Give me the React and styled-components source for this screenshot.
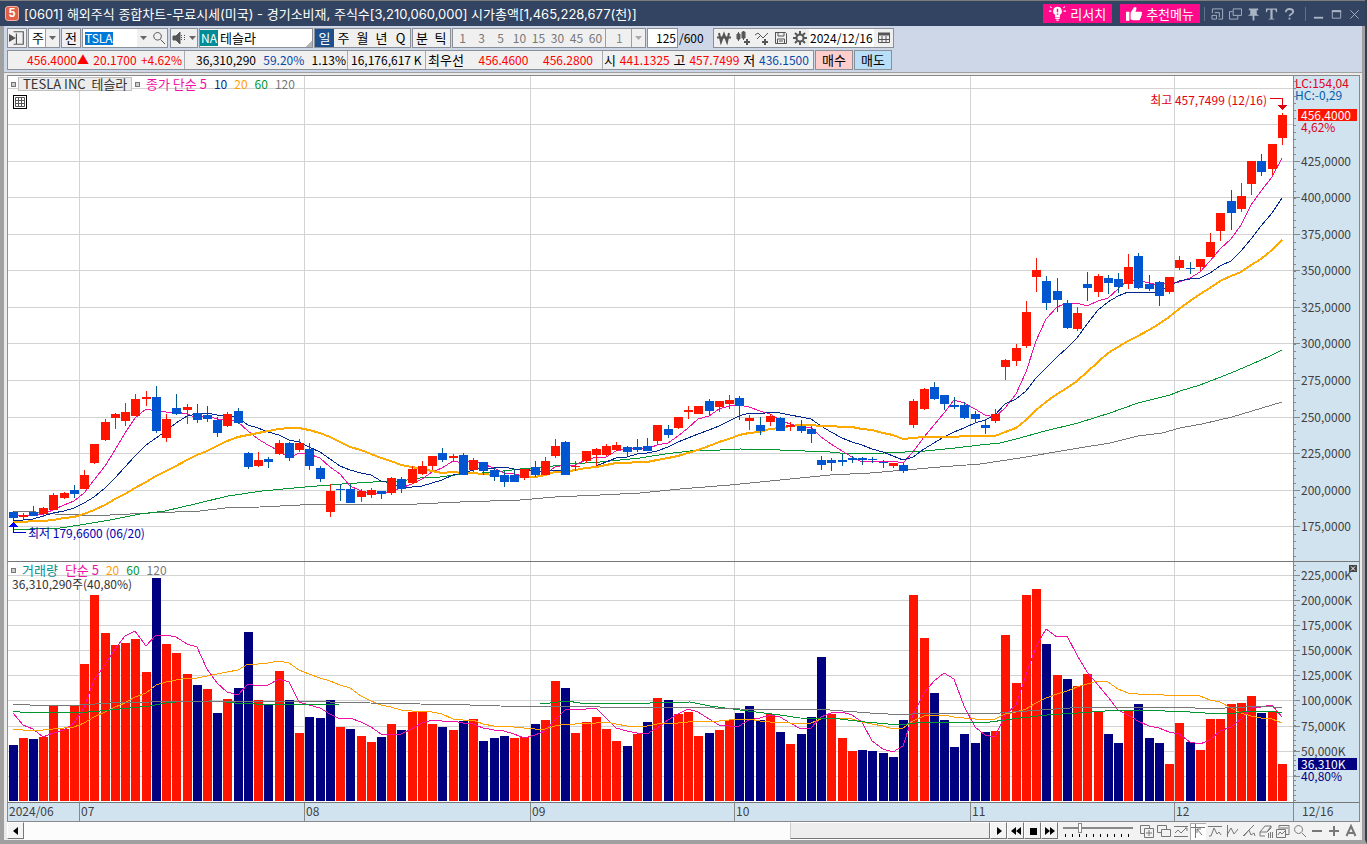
import styled, {createGlobalStyle, css} from 'styled-components';

const GlobalStyle = createGlobalStyle`
  * {
    box-sizing: border-box;
  }
  body {
    margin: 0;
    background: #a0a0a0;
    font-family: 'Noto Sans CJK KR', sans-serif;
    font-size: 13px;
    line-height: 14px;
    color: #000;
  }
  button, input, select {
    font: inherit;
    color: inherit;
    border-radius: 0;
    margin: 0;
    padding: 0;
  }
`;

const RED = '#ff1400';
const BLUE = '#0055d0';
const NAVY = '#000080';
const PINK = '#f010a8';

// [rising, high, body top, body bottom, low, volume top]
const BARS = [
  [0, 511, 512, 518, 520, 745], [1, 513, 515, 517, 519, 738],
  [0, 506, 512, 516, 516, 739], [1, 507, 508, 514, 517, 737],
  [1, 493, 495, 510, 510, 706], [1, 492, 493, 498, 499, 729],
  [0, 485, 490, 494, 498, 706], [1, 470, 475, 489, 489, 664],
  [1, 444, 444, 463, 464, 595], [1, 419, 422, 440, 441, 633],
  [1, 413, 414, 418, 429, 645], [1, 403, 412, 421, 426, 643],
  [1, 394, 399, 416, 416, 639], [1, 391, 397, 399, 406, 672],
  [0, 386, 397, 431, 433, 578], [1, 414, 419, 438, 442, 644],
  [0, 394, 408, 414, 415, 653], [1, 404, 407, 410, 424, 674],
  [0, 404, 413, 420, 423, 685], [0, 406, 415, 419, 422, 689],
  [0, 417, 420, 433, 437, 713], [1, 412, 414, 426, 427, 699],
  [0, 408, 411, 423, 424, 688], [0, 452, 453, 467, 469, 632],
  [1, 452, 460, 466, 467, 700], [0, 457, 459, 462, 468, 705],
  [1, 440, 443, 454, 455, 671], [0, 442, 443, 458, 461, 700],
  [1, 439, 443, 450, 452, 733], [0, 443, 449, 466, 470, 717],
  [0, 466, 468, 479, 482, 718], [1, 484, 491, 512, 517, 700],
  [0, 484, 489, 490, 501, 727], [0, 484, 489, 503, 503, 729],
  [1, 489, 491, 497, 502, 736], [1, 488, 490, 495, 498, 742],
  [0, 491, 491, 494, 499, 737], [1, 477, 478, 493, 495, 724],
  [0, 477, 479, 489, 493, 730], [1, 466, 469, 483, 484, 712],
  [1, 461, 466, 474, 475, 712], [1, 456, 456, 466, 470, 724],
  [0, 448, 453, 460, 462, 727], [1, 454, 456, 458, 462, 730],
  [0, 453, 455, 475, 475, 721], [1, 458, 460, 470, 472, 719],
  [0, 462, 462, 471, 475, 741], [0, 468, 470, 477, 481, 738],
  [0, 471, 475, 482, 487, 736], [0, 469, 475, 482, 482, 738],
  [1, 469, 469, 478, 480, 737], [0, 461, 467, 475, 477, 724],
  [1, 457, 461, 475, 475, 720], [1, 439, 446, 456, 458, 681],
  [0, 441, 442, 475, 475, 688], [1, 461, 466, 467, 471, 733],
  [1, 451, 451, 461, 463, 722], [1, 448, 449, 455, 466, 717],
  [1, 444, 446, 455, 456, 729], [1, 442, 445, 450, 451, 741],
  [0, 446, 447, 452, 456, 746], [0, 439, 447, 450, 452, 734],
  [0, 438, 446, 451, 451, 722], [1, 425, 425, 441, 444, 698],
  [0, 425, 429, 435, 438, 700], [1, 417, 417, 428, 429, 714],
  [1, 406, 410, 412, 419, 712], [1, 406, 406, 414, 414, 736],
  [0, 399, 401, 411, 415, 733], [1, 401, 401, 407, 412, 730],
  [1, 395, 400, 404, 409, 720], [0, 396, 398, 406, 420, 713],
  [1, 415, 418, 421, 430, 706], [0, 417, 425, 431, 435, 720],
  [1, 414, 416, 422, 426, 714], [0, 417, 418, 431, 431, 732],
  [1, 422, 425, 427, 431, 744], [0, 420, 426, 431, 433, 734],
  [0, 426, 429, 434, 443, 717], [0, 456, 460, 465, 470, 657],
  [0, 458, 460, 463, 471, 714], [0, 454, 460, 462, 466, 738],
  [0, 456, 458, 460, 463, 751], [0, 457, 458, 460, 465, 750],
  [0, 457, 459, 460, 463, 751], [0, 460, 462, 463, 468, 753],
  [1, 463, 463, 466, 468, 757], [0, 463, 465, 471, 473, 720],
  [1, 399, 401, 425, 428, 595], [1, 388, 389, 409, 410, 638],
  [0, 382, 387, 399, 400, 693], [0, 395, 395, 404, 410, 720],
  [0, 397, 405, 407, 409, 747], [0, 402, 405, 418, 419, 734],
  [0, 411, 414, 419, 423, 743], [0, 419, 425, 428, 434, 732],
  [1, 409, 414, 421, 423, 731], [1, 359, 360, 367, 380, 635],
  [1, 344, 348, 361, 366, 683], [1, 301, 312, 346, 348, 595],
  [1, 258, 270, 277, 292, 589], [0, 276, 281, 303, 310, 644],
  [0, 278, 291, 300, 312, 675], [0, 300, 303, 328, 329, 679],
  [1, 307, 313, 329, 331, 686], [0, 272, 284, 288, 301, 674],
  [1, 274, 276, 292, 297, 712], [0, 275, 278, 283, 294, 734],
  [0, 273, 279, 287, 293, 743], [1, 254, 267, 284, 289, 711],
  [0, 253, 256, 288, 289, 704], [0, 275, 284, 289, 291, 738],
  [0, 281, 282, 296, 306, 743], [1, 277, 277, 292, 294, 764],
  [1, 256, 260, 268, 270, 723], [0, 262, 268, 269, 274, 742],
  [1, 259, 259, 267, 271, 750], [1, 233, 242, 257, 257, 719],
  [1, 213, 213, 231, 241, 719], [0, 190, 201, 213, 230, 704],
  [1, 183, 196, 209, 212, 703], [1, 161, 161, 184, 195, 696],
  [0, 154, 161, 172, 176, 713], [1, 144, 144, 169, 175, 711],
  [1, 113, 115, 138, 145, 764],
];

const VOLUME_DOWN = new Set([
  0, 2, 14, 18, 20, 22, 23, 25, 27, 29, 30, 31, 33, 36, 38, 42, 44, 46, 47, 48,
  51, 54, 60, 62, 64, 68, 71, 72, 73, 75, 77, 78, 79, 83, 84, 85, 86, 87, 90,
  91, 92, 93, 94, 95, 101, 103, 107, 108, 110, 111, 112, 115, 122,
]);

const left = i => Math.floor(9 + i * 10.236);
const closes = BARS.map(([up, , top, bottom]) => (up ? top : bottom));
const volumes = BARS.map(bar => bar[5]);

// `lead` holds the averages of the days before a full window is available
const average = (values, n, lead) =>
  values
    .map((_, i) => {
      const sum = values.slice(Math.max(0, i - n + 1), i + 1);
      const y = i < lead.length ? lead[i] : sum.reduce((a, b) => a + b) / n;
      return `${left(i) + 4},${Math.round(y)}`;
    })
    .join(' ');

const PRICE_5 = average(closes, 5, [515, 515, 515, 514]);
const PRICE_10 = average(closes, 10, [
  520, 520, 519, 516, 513, 511, 508, 503, 497,
]);
const PRICE_20 = average(closes, 20, [
  522, 522, 521, 521, 520, 518, 517, 514, 510, 505, 499, 494, 488, 482, 476,
  471, 466, 460, 455,
]);
const PRICE_60 =
  '13,529 30,529 60,528 80,525 110,520 140,514 165,511 195,504 228,496 262,491 305,487 330,485 342,484 373,482 400,481 420,478 440,477 455,475 495,472 520,469 545,467 570,464 600,462 640,458 665,454 690,451 720,450 740,449 780,450 830,452 850,454 885,453 925,451 955,448 980,445 1000,443 1016,439 1045,431 1078,423 1110,413 1138,403 1170,395 1180,391 1200,385 1231,373 1252,364 1270,356 1282,350';
const PRICE_120 =
  '13,511 27,511 55,514 80,515 110,515 150,513 200,511 225,508 260,507 300,505 330,504 417,504 460,502 520,500 555,497 600,495 640,493 680,489 730,485 780,480 830,475 870,473 905,470 940,467 980,464 1020,458 1073,449 1110,443 1138,436 1162,433 1180,428 1202,424 1232,417 1262,408 1282,402';
const VOLUME_5 = average(volumes, 5, [713, 725, 729, 737]);
const VOLUME_20 = average(volumes, 20, [
  729, 730, 730, 730, 729, 728, 727, 723, 717, 712, 707, 703, 697, 693, 685,
  682, 680, 678, 678,
]);
const VOLUME_60 =
  '13,711 20,712 55,712 75,713 100,711 120,709 150,706 165,703 185,701 215,701 235,703 250,703 260,705 340,704 540,704 550,703 567,701 580,703 650,703 690,702 710,706 740,710 780,715 800,718 840,719 865,722 900,725 915,723 940,722 990,722 1020,718 1047,715 1078,713 1105,711 1140,710 1165,711 1190,712 1205,713 1235,713 1250,711 1270,711 1282,713';
const VOLUME_120 =
  '13,704 30,705 80,705 110,703 150,702 210,701 330,702 370,703 420,704 470,705 500,706 600,707 690,707 740,709 830,710 870,713 905,715 920,713 1000,713 1040,710 1085,707 1170,707 1195,708 1225,708 1265,706 1282,708';

const PRICE_GRID = [88, 124, 161, 197, 234, 270, 307, 343, 380, 417, 453, 490, 526];
const VOLUME_GRID = [575, 600, 625, 650, 675, 700, 726, 751, 776];
const MONTHS = [
  ['2024/06', 71], ['07', 225], ['08', 226], ['09', 204], ['10', 236],
  ['11', 204], ['12', 119],
];
const MONTH_LINES = [79, 304, 530, 734, 970, 1174];

const Window = styled.div`
  display: flex;
  flex-direction: column;
  min-height: 100vh;
  border-bottom: 4px solid #a0a0a0;
  border-right: 2px solid #36404c;
`;

const TitleBar = styled.header`
  display: flex;
  align-items: center;
  height: 26px;
  padding: 0 4px 0 5px;
  border-top: 1px solid #7d7d7d;
  background: #324461;
  color: #fff;
`;

const Title = styled.h1`
  flex: 1;
  margin: 0 0 0 5px;
  font-family: Inter, 'Noto Sans CJK KR', sans-serif;
  font-size: 13px;
  font-weight: normal;
  white-space: pre;
`;

const AppBadge = styled.span`
  width: 14px;
  height: 15px;
  border: 1px solid #f3b3a0;
  border-radius: 3px;
  background: #e2604a;
  font: bold 12px/13px 'Liberation Sans', sans-serif;
  text-align: center;
`;

const PinkButton = styled.button`
  display: flex;
  align-items: center;
  gap: 4px;
  height: 19px;
  margin-right: ${({$gap}) => $gap}px;
  padding: 0 6px;
  border: 0;
  background: #ff0a8a;
  color: #fff;
`;

const TitleIcons = styled.div`
  display: flex;
  align-items: center;
  gap: 5px;
  padding-left: 6px;
  margin-right: ${({$gap = 0}) => $gap}px;
  border-left: 1px solid #62718a;
`;

const GlyphButton = styled.button`
  display: flex;
  align-items: center;
  justify-content: center;
  width: 13px;
  height: 14px;
  border: 0;
  background: none;
  color: #aab4c4;
`;

const Body = styled.div`
  display: flex;
  flex: 1;
  flex-direction: column;
  border: solid #a0a0a0;
  border-width: 0 3px 0 4px;
`;

const Toolbars = styled.div`
  height: 47px;
  padding: 2px 0 0 3px;
  border-bottom: 1px solid #a0a0a0;
  background: #cdd7e7;
`;

const Toolbar = styled.div`
  display: flex;
  height: 20px;
  margin-bottom: 2px;
`;

const Group = styled.div`
  display: flex;
  margin-right: ${({$gap = 1}) => $gap}px;
  border: 1px solid #8a8f98;
  background: #f0f0f0;
  > * + * {
    border-left: 1px solid #9a9fa8;
  }
`;

const ToolButton = styled.button`
  display: flex;
  align-items: center;
  justify-content: center;
  width: ${({$width = 19}) => $width}px;
  border: 0;
  background: #f0f0f0;
  svg {
    color: #555;
  }
  ${({$active}) =>
    $active &&
    css`
      background: #1c4f8c;
      color: #fff;
    `}
`;

const MinuteButton = styled(ToolButton)`
  font-size: 12px;
  color: #777;
`;

const Select = styled.select`
  appearance: none;
  width: ${({$width}) => $width}px;
  padding: 0 0 0 ${({$muted}) => ($muted ? 10 : 3)}px;
  border: 0;
  outline: 0;
  font-size: ${({$muted}) => ($muted ? 12 : 13)}px;
  color: ${({$muted}) => ($muted ? '#888' : '#000')};
  background: linear-gradient(#9a9fa8, #9a9fa8) no-repeat right 13px top / 1px 100%,
    linear-gradient(#f0f0f0, #f0f0f0) no-repeat right / 13px 100%,
    ${({$muted}) => ($muted ? '#f0f0f0' : '#fff')};
`;

const SelectBox = styled.label`
  display: grid;
  align-items: center;
  > * {
    grid-area: 1 / 1;
    height: 100%;
  }
  > svg {
    justify-self: end;
    width: 7px;
    height: 4px;
    margin-right: 3px;
    pointer-events: none;
  }
`;

const TextInput = styled.input`
  width: ${({$width}) => $width}px;
  padding: 0 1px;
  border: 0;
  outline: 0;
  background: #fff;
  font-size: 12px;
  text-align: ${({$align = 'left'}) => $align};
`;

const SymbolInput = styled(TextInput)`
  padding: 0 2px;
  color: #fff;
  background: linear-gradient(#0078d7, #0078d7) no-repeat 2px 3px / 28px 13px, #fff;
`;

const StockName = styled.div`
  display: flex;
  align-items: center;
  gap: 2px;
  width: 112px;
  background: linear-gradient(135deg, #fff 95%, #b4b4b4 95%);
`;

const Market = styled.span`
  padding: 1px;
  background: #008c96;
  color: #fff;
  font-size: 12px;
`;

const Total = styled.span`
  width: 34px;
  font-size: 12px;
  line-height: 20px;
`;

const Quote = styled.div`
  display: flex;
  width: 807px;
  margin-right: 1px;
  border: 1px solid #8a8f98;
  background: #f0f0f0;
  font-size: 12px;
  line-height: 18px;
`;

const QuoteCell = styled.div`
  display: flex;
  justify-content: space-between;
  width: ${({$width}) => $width}px;
  padding: 0 ${({$right = 2}) => $right}px 0 ${({$left = 4}) => $left}px;
  border-right: 1px solid #a8adb4;
  white-space: nowrap;
  &:last-child {
    border-right: 0;
  }
`;

const QuoteLabel = styled.span`
  font-size: 13px;
`;

const Tone = styled.span`
  color: ${({$color}) => $color};
`;

const Period = styled(Tone)`
  font-size: 12px;
`;

const TradeButton = styled.button`
  width: 38px;
  margin-right: 1px;
  border: 1px solid #8a8f98;
  background: ${({$fill}) => $fill};
`;

const ChartFrame = styled.main`
  display: flex;
  flex: 1;
  flex-direction: column;
  padding: 2px 2px 0 3px;
  background: #ebebeb;
`;

const Chart = styled.div`
  display: grid;
  flex: 1;
  grid-template: 486fr 241fr 19px / minmax(0, 1fr) 66px;
  border: 1px solid #888;
  border-width: 1px 1px 0 0;
  background: #fff;
`;

const Panel = styled.section`
  position: relative;
  border-left: 1px solid #909090;
  border-bottom: 1px solid #777;
`;

const Plot = styled.svg`
  position: absolute;
  width: 100%;
  height: 100%;
  shape-rendering: crispEdges;
  fill: none;
`;

const Axis = styled(Panel)`
  border-left: 0;
  background: #d2e3f0;
`;

const AxisLabel = styled.span`
  position: absolute;
  left: ${({$left = 8}) => $left}px;
  right: 2px;
  margin-top: -6px;
  padding-left: ${({$fill}) => ($fill ? 3 : 0)}px;
  font-size: 12px;
  line-height: 12px;
  background: ${({$fill = 'none'}) => $fill};
  color: ${({$color = '#404040'}) => $color};
`;

const Legend = styled.div`
  position: absolute;
  top: 1px;
  left: 3px;
  display: flex;
  align-items: center;
  white-space: pre;
`;

const Marker = styled.i`
  width: 5px;
  height: 5px;
  margin-right: ${({$gap = 2}) => $gap}px;
  border: 1px solid #777;
  background: #ccc;
`;

const Name = styled.span`
  width: 114px;
  height: 14px;
  margin-right: 3px;
  padding: 0 2px 0 4px;
  border: 1px solid #c0c0c0;
  background: #ececec;
  color: #333;
  line-height: 12px;
`;

const Averages = styled.span`
  display: flex;
  gap: 7px;
`;

const TableButton = styled.button`
  position: absolute;
  top: 19px;
  left: 5px;
  width: 14px;
  height: 14px;
  border: 1px solid #000;
  background: #fff;
  svg {
    display: block;
  }
`;

const Note = styled.span`
  position: absolute;
  top: ${({$top}) => $top};
  left: ${({$left = 'auto'}) => $left};
  right: ${({$right = 'auto'}) => $right};
  color: ${({$color}) => $color};
  font-size: 12px;
  line-height: 12px;
  white-space: nowrap;
`;

const CloseButton = styled.button`
  position: absolute;
  top: 3px;
  right: 2px;
  width: 8px;
  height: 7px;
  border: 0;
  background: #444;
  svg {
    display: block;
  }
`;

const MonthRow = styled.div`
  display: grid;
  grid-template-columns: ${MONTHS.map(([, width]) => `${width}fr`).join(' ')};
  border: solid #888;
  border-width: 0 0 1px 1px;
  background: #d2e3f0;
`;

const Month = styled.span`
  padding: 1px 0 0 1px;
  border-left: ${({$first}) => ($first ? 0 : 1)}px solid #888;
  color: #404040;
  font-size: 12px;
`;

const LastDay = styled(Month)`
  padding-left: 8px;
  border-bottom: 1px solid #888;
  background: #d2e3f0;
`;

const Footer = styled.footer`
  display: flex;
  height: 18px;
  background: #f2f2f2;
`;

const FooterButton = styled.button`
  display: flex;
  align-items: center;
  justify-content: center;
  width: 17px;
  height: 17px;
  border: 1px solid;
  border-color: #fff #777 #777 #fff;
  background: #f4f4f4;
`;

const Track = styled.div`
  display: grid;
  flex: 1;
  grid-template-columns: 765fr 200fr;
  background: #fcfcfc;
`;

const Thumb = styled.div`
  grid-column: 2;
  height: 17px;
  border: 1px solid;
  border-color: #fff #777 #777 #ccc;
  background: #eee;
`;

const Zoom = styled.label`
  display: flex;
  width: 70px;
  margin: 0 6px 0 5px;
  flex-direction: column;
`;

const Range = styled.input`
  appearance: none;
  width: 70px;
  height: 12px;
  background: linear-gradient(#888, #888) no-repeat center / 100% 2px;
  &::-webkit-slider-thumb {
    appearance: none;
    width: 4px;
    height: 10px;
    border: 1px solid #888;
    background: #fff;
  }
`;

const DrawTools = styled.div`
  display: flex;
  align-items: center;
  gap: 1px;
  padding-right: 1px;
`;

const DrawButton = styled.button`
  display: flex;
  align-items: center;
  justify-content: center;
  width: 16px;
  height: 17px;
  border: 0;
  background: ${({$on}) => ($on ? '#fff' : 'none')};
  box-shadow: ${({$on}) => ($on ? 'inset 1px 1px #aaa' : 'none')};
  color: #777;
`;

const Icon = ({d, size = 14, fill = 'none', width = 1, children}) => (
  <svg
    width={size}
    height={size}
    viewBox="0 0 14 14"
    fill={fill}
    stroke={fill === 'none' ? 'currentColor' : 'none'}
    strokeWidth={width}
    aria-hidden="true"
  >
    {d && <path d={d} />}
    {children}
  </svg>
);

const Caret = ({color = '#666'}) => (
  <svg viewBox="0 0 7 4" width="7" height="4" fill={color} aria-hidden="true">
    <path d="M0 0h7L3.5 4z" />
  </svg>
);

const Dropdown = ({label, value, width, muted}) => (
  <SelectBox>
    <Select aria-label={label} $width={width} $muted={muted} defaultValue={value}>
      <option>{value}</option>
    </Select>
    <Caret color={muted ? '#aaa' : '#666'} />
  </SelectBox>
);

const Header = () => (
  <TitleBar>
    <AppBadge>5</AppBadge>
    <Title>
      [0601] 해외주식 종합차트-무료시세(미국) - 경기소비재, 주식수[3,210,060,000]
      {' 시가총액[1,465,228,677(천)]'}
    </Title>
    <PinkButton $gap={8}>
      <Icon size={17} fill="#fff">
        <path d="M7 1.5a3.6 3.6 0 0 1 2 6.6V10H5V8.1a3.6 3.6 0 0 1 2-6.6zM5.2 10.6h3.6v1H5.2zM6 12h2v1H6zM0 4.5h2v1H0zM12 4.5h2v1h-2zM1 1l1.5 1-.6.6L.6 1.6zM13 1l-1.5 1 .6.6 1.3-1z" />
        <path d="M6.4 3h1.2v3H6.4zM6.4 7h1.2v1H6.4z" fill="#ff0a8a" />
      </Icon>
      리서치
    </PinkButton>
    <PinkButton $gap={4}>
      <Icon
        size={16}
        fill="#fff"
        d="M0 5h3v8H0zM4 6l3-5h1.5c1 0 .8 2-.2 4H13c1.3 0 1.3 1.6.4 2 .8.6.5 1.7-.4 2 .5.8 0 1.6-.8 1.8.3 1-.2 1.7-1.2 1.7H6l-2-1z"
      />
      추천메뉴
    </PinkButton>
    <TitleIcons $gap={9}>
      <GlyphButton aria-label="화면 크기">
        <Icon d="M1.5 6V1.5h11v11H8M4 5.5h5v5M1 8.5h5v4H1z" />
      </GlyphButton>
      <GlyphButton aria-label="화면 복사">
        <Icon d="M4.5 1.5h9v7h-9zM4 4.5H.5v8h9V9" />
      </GlyphButton>
      <GlyphButton aria-label="고정">
        <Icon fill="currentColor" d="M2 1h10v2h-1.5v4L13 9H8v5H6V9H1l2.5-2V3H2z" />
      </GlyphButton>
      <GlyphButton aria-label="글꼴">
        <Icon fill="currentColor" d="M1 1h12v4h-1L11 2.5H8.2V12H10v1H4v-1h1.8V2.5H3L2 5H1z" />
      </GlyphButton>
      <GlyphButton aria-label="도움말">
        <Icon width={2} d="M3 5C3 0 11 1 11 4.5 11 7 7 7 7 9.5M7 11v2" />
      </GlyphButton>
    </TitleIcons>
    <TitleIcons>
      <GlyphButton aria-label="최소화">
        <Icon width={2} d="M2 11h10" />
      </GlyphButton>
      <GlyphButton aria-label="최대화">
        <Icon>
          <path d="M2.5 3.5h9v8h-9z" />
          <path d="M2 4h10" strokeWidth="2" />
        </Icon>
      </GlyphButton>
      <GlyphButton aria-label="닫기">
        <Icon d="M2.5 3l9 9M11.5 3l-9 9" />
      </GlyphButton>
    </TitleIcons>
  </TitleBar>
);

const Controls = () => (
  <Toolbar>
    <Group>
      <ToolButton aria-label="화면 연결" $width={18}>
        <Icon size={16}>
          <path d="M4 1.5h8.5v11H4M6.5 3v9" />
          <path d="M0 4v6l5-3z" fill="currentColor" />
        </Icon>
      </ToolButton>
    </Group>
    <Group>
      <Dropdown label="구분" value="주" width={30} />
    </Group>
    <Group>
      <ToolButton $width={18}>전</ToolButton>
    </Group>
    <Group $gap={2}>
      <SymbolInput aria-label="종목 코드" defaultValue="TSLA" $width={54} />
      <ToolButton aria-label="종목 목록" $width={13}>
        <Caret />
      </ToolButton>
      <ToolButton aria-label="검색" $width={17}>
        <Icon d="M5.5 1.5a3.8 3.8 0 1 0 .1 0zM8.5 8.5l4.5 4.5" />
      </ToolButton>
    </Group>
    <Group>
      <ToolButton aria-label="소리" $width={16}>
        <Icon>
          <path d="M1 5h3l4-4v12L4 9H1z" fill="#555" />
          <path d="M9.5 4v6M12.5 4v6" strokeDasharray="1 1" />
        </Icon>
      </ToolButton>
      <ToolButton aria-label="소리 설정" $width={10}>
        <Caret />
      </ToolButton>
    </Group>
    <Group>
      <StockName>
        <Market>NA</Market>테슬라
      </StockName>
    </Group>
    <Group>
      {['일', '주', '월', '년', 'Q'].map((period, i) => (
        <ToolButton key={period} $active={i === 0}>
          {period}
        </ToolButton>
      ))}
    </Group>
    <Group>
      <ToolButton $width={18}>분</ToolButton>
      <ToolButton>틱</ToolButton>
    </Group>
    <Group>
      {[1, 3, 5, 10, 15, 30, 45, 60].map(minutes => (
        <MinuteButton key={minutes}>{minutes}</MinuteButton>
      ))}
      <Dropdown label="분 간격" value="1" width={39} muted />
    </Group>
    <Group>
      <TextInput aria-label="표시 개수" defaultValue="125" $width={29} $align="right" />
    </Group>
    <Total>/600</Total>
    <Group>
      <ToolButton aria-label="원화">
        <Icon width={2} d="M2 2l2 9 3-8 3 8 2-9M0 6.5h14" />
      </ToolButton>
      <ToolButton aria-label="봉 추가">
        <Icon>
          <path d="M1 3h3v5H1zM6 1h3v6H6z" fill="#666" />
          <path d="M2.5 1v9M7.5 0v9" />
          <path d="M11 8v6M8 11h6" strokeWidth="2" />
        </Icon>
      </ToolButton>
      <ToolButton aria-label="지표 추가">
        <Icon>
          <path d="M0 4l3-2 5 5 5-5M2 8l3-3" />
          <path d="M10 8v6M7 11h6" strokeWidth="2" />
        </Icon>
      </ToolButton>
      <ToolButton aria-label="저장">
        <Icon d="M1 1.5h10.5l1 1v10H1.5v-11M4 1v4h6V1M3.5 13V8h7v5M5 10h4" />
      </ToolButton>
      <ToolButton aria-label="설정">
        <Icon>
          <circle cx="7" cy="7" r="3.5" strokeWidth="2" />
          <path
            d="M7 0v3M7 11v3M0 7h3M11 7h3M2 2l2 2M10 10l2 2M12 2l-2 2M4 10l-2 2"
            strokeWidth="2"
          />
        </Icon>
      </ToolButton>
      <TextInput aria-label="날짜" defaultValue="2024/12/16" $width={65} />
      <ToolButton aria-label="달력">
        <Icon>
          <path d="M1.5 2.5h11v9h-11zM5 5v7M9 5v7M2 8.5h11" />
          <path d="M1 3h12" strokeWidth="3" />
        </Icon>
      </ToolButton>
    </Group>
  </Toolbar>
);

const Quotes = () => (
  <Toolbar>
    <Quote>
      <QuoteCell $width={177} $left={19}>
        <Tone $color="red">456.4000▲</Tone>
        <Tone $color="red">20.1700</Tone>
        <Tone $color="red">+4.62%</Tone>
      </QuoteCell>
      <QuoteCell $width={163} $left={11} $right={1}>
        <span>36,310,290</span>
        <Tone $color="#0a4aa8">59.20%</Tone>
        <span>1.13%</span>
      </QuoteCell>
      <QuoteCell $width={78} $left={3}>
        16,176,617 K
      </QuoteCell>
      <QuoteCell $width={177} $left={2} $right={9}>
        <QuoteLabel>최우선</QuoteLabel>
        <Tone $color="red">456.4600</Tone>
        <Tone $color="red">456.2800</Tone>
      </QuoteCell>
      <QuoteCell $width={210} $left={1} $right={4}>
        <QuoteLabel>시</QuoteLabel>
        <Tone $color="red">441.1325</Tone>
        <QuoteLabel>고</QuoteLabel>
        <Tone $color="red">457.7499</Tone>
        <QuoteLabel>저</QuoteLabel>
        <Tone $color="#0a4aa8">436.1500</Tone>
      </QuoteCell>
    </Quote>
    <TradeButton $fill="#ffcdcb">매수</TradeButton>
    <TradeButton $fill="#b9def7">매도</TradeButton>
  </Toolbar>
);

const Grid = ({rows, top, bottom}) => (
  <g stroke="#d3d3d3">
    {rows.map(y => (
      <path key={y} d={`M8 ${y + 0.5}H1293`} />
    ))}
    {MONTH_LINES.map(x => (
      <path key={x} d={`M${x + 0.5} ${top}V${bottom}`} />
    ))}
  </g>
);

const PricePanel = () => (
  <Panel>
    <Plot viewBox="8 76 1285 485" preserveAspectRatio="none">
      <Grid rows={PRICE_GRID} top={76} bottom={561} />
      <polyline points={PRICE_120} stroke="#777" />
      <polyline points={PRICE_60} stroke="#009632" />
      <polyline points={PRICE_5} stroke={PINK} />
      <polyline points={PRICE_10} stroke="#002890" />
      <polyline points={PRICE_20} stroke="#ffaa00" strokeWidth="2" />
      {BARS.map(([up, high, top, bottom, low], i) => (
        <g key={i} fill={up ? RED : BLUE}>
          <rect
            x={left(i) + 4}
            y={high}
            width="1"
            height={low - high}
            fill={up ? RED : '#005a8c'}
          />
          <rect x={left(i)} y={top} width="9" height={bottom - top} />
        </g>
      ))}
      <path d="M13.5 526V532.5H26" stroke="#0000c0" />
      <path d="M9 527h9l-4.5-5z" fill="#0000ff" />
      <path d="M1270 98.5H1282.5V105" stroke="#e00010" />
      <path d="M1278 105h9l-4.5 5z" fill="#e00010" />
    </Plot>
    <Legend>
      <Marker />
      <Name>TESLA INC  테슬라</Name>
      <Marker $gap={6} />
      <Averages>
        <Tone $color={PINK}>종가 단순 5</Tone>
        <Period $color="#002890">10</Period>
        <Period $color="#ffa000">20</Period>
        <Period $color="#009632">60</Period>
        <Period $color="#777">120</Period>
      </Averages>
    </Legend>
    <TableButton aria-label="데이터 표">
      <svg width="12" height="12" stroke="#555" fill="none">
        <path d="M1.5 1.5h9v9h-9zM4.5 2v9M7.5 2v9M2 4.5h9M2 7.5h9" />
      </svg>
    </TableButton>
    <Note $top="93%" $left="20px" $color="#0000b0">
      최저 179,6600 (06/20)
    </Note>
    <Note $top="18px" $right="26px" $color="#e00010">
      최고 457,7499 (12/16)
    </Note>
  </Panel>
);

const VolumePanel = () => (
  <Panel>
    <Plot viewBox="8 562 1285 240" preserveAspectRatio="none">
      <Grid rows={VOLUME_GRID} top={562} bottom={803} />
      {volumes.map((y, i) => (
        <rect
          key={i}
          x={left(i)}
          y={y}
          width="9"
          height={801 - y}
          fill={VOLUME_DOWN.has(i) ? NAVY : RED}
        />
      ))}
      <polyline points={VOLUME_5} stroke={PINK} />
      <polyline points={VOLUME_20} stroke="#ffa000" />
      <polyline points={VOLUME_60} stroke="#009632" />
      <polyline points={VOLUME_120} stroke="#777" />
    </Plot>
    <Legend>
      <Marker $gap={6} />
      <Averages>
        <Tone $color="#009090">거래량</Tone>
        <Tone $color={PINK}>단순 5</Tone>
        <Period $color="#ffa000">20</Period>
        <Period $color="#009632">60</Period>
        <Period $color="#777">120</Period>
      </Averages>
    </Legend>
    <Note $top="16px" $left="4px" $color="#333">
      36,310,290주(40,80%)
    </Note>
  </Panel>
);

const Ticks = ({rows, top, height, start, step}) => (
  <Plot viewBox={`0 ${top} 66 ${height}`} preserveAspectRatio="none">
    <g stroke="#888">
      <path d={`M.5 ${top}v${height}`} />
      {Array.from({length: Math.floor((top + height - start) / step) + 1}, (_, i) => (
        <path key={i} d={`M0 ${Math.round(start + i * step) + 0.5}h3`} />
      ))}
      {rows.map(y => (
        <path key={y} d={`M0 ${y + 0.5}h7`} />
      ))}
    </g>
  </Plot>
);

const PriceAxis = () => {
  const place = y => ({top: `${((y - 76) / 485) * 100}%`});
  return (
    <Axis>
      <Ticks rows={PRICE_GRID.slice(2)} top={76} height={485} start={81} step={7.3} />
      <AxisLabel $left={2} $color="#e00020" style={place(83)}>LC:154,04</AxisLabel>
      <AxisLabel $left={2} $color="#0060a8" style={place(95)}>HC:-0,29</AxisLabel>
      <AxisLabel $left={5} $color="#fff" $fill={RED} style={place(115)}>
        456,4000
      </AxisLabel>
      <AxisLabel $color="#e00020" style={place(127)}>4,62%</AxisLabel>
      {PRICE_GRID.slice(2).map((y, i) => (
        <AxisLabel key={y} style={place(y)}>
          {425 - i * 25},0000
        </AxisLabel>
      ))}
    </Axis>
  );
};

const VolumeAxis = () => {
  const place = y => ({top: `${((y - 562) / 240) * 100}%`});
  return (
    <Axis>
      <Ticks rows={VOLUME_GRID} top={562} height={240} start={565} step={5} />
      {VOLUME_GRID.slice(0, 8).map((y, i) => (
        <AxisLabel key={y} style={place(y)}>
          {225 - i * 25},000K
        </AxisLabel>
      ))}
      <AxisLabel $left={5} $color="#fff" $fill={NAVY} style={place(764)}>
        36,310K
      </AxisLabel>
      <AxisLabel $color={NAVY} style={place(776)}>40,80%</AxisLabel>
      <CloseButton aria-label="거래량 닫기">
        <svg width="8" height="7" stroke="#fff">
          <path d="M2 1.5l4 4M6 1.5l-4 4" />
        </svg>
      </CloseButton>
    </Axis>
  );
};

const DRAW_TOOLS = [
  ['차트 추가', 'M4 9.5H.5v-8h9V4M4.5 4.5h9v9h-9zM9 6v6M6 9h6'],
  ['차트 겹치기', 'M4 8.5H.5v-7h9V5M4.5 5.5h9v7h-9z'],
  ['구간', 'M0 2.5h14M0 12.5h14M1 9l3-3 3 3 5-5M11 4h2v3'],
  ['십자선', 'M0 3.5h14M4.5 0v14M6 5l5 6M6 9V5h4'],
  ['추세선', 'M0 2.5h14M1 12h2l3-8 3 6 2-2 2 3'],
  ['수직선', 'M2.5 1v12M2 11l4-7 3 6 4-5'],
  ['각도선', 'M1 12L12 1M2 12l5-6 2 5 3-2 1 3'],
  ['지우개', 'M1 8l5-6h6L8 8zM1 8v4h5M8 8l4-4V2M9.5 9v5M11.5 8v6M13.5 8v6'],
  ['복사', 'M.5 5.5h9v8h-9zM3 5V1.5h10v9h-3M2 11l2-3 2 2 3-3M4 4h8'],
  ['확대경', 'M5.5 1.5a4 4 0 1 0 .1 0zM9 9l4 4'],
  ['축소', 'M2 7h10', 2],
  ['확대', 'M2 7h10M7 2v10', 2],
  ['글자', 'M2.5 12L7 2l4.5 10M4 9h6', 2],
];

const BottomBar = () => (
  <Footer>
    <FooterButton aria-label="왼쪽으로">
      <Icon fill="#000" d="M9 3v8L4 7z" />
    </FooterButton>
    <Track>
      <Thumb />
    </Track>
    <FooterButton aria-label="오른쪽으로">
      <Icon fill="#000" d="M5 3v8l5-4z" />
    </FooterButton>
    <FooterButton aria-label="뒤로">
      <Icon fill="#000" d="M7 3v8L2 7zM12 3v8L7 7z" />
    </FooterButton>
    <FooterButton aria-label="정지">
      <Icon fill="#000" d="M4 4h7v7H4z" />
    </FooterButton>
    <FooterButton aria-label="앞으로">
      <Icon fill="#000" d="M2 3v8l5-4zM7 3v8l5-4z" />
    </FooterButton>
    <Zoom>
      <Range type="range" aria-label="재생 속도" defaultValue="22" />
      <svg width="70" height="4" stroke="#000" shapeRendering="crispEdges">
        {Array.from({length: 10}, (_, i) => (
          <path key={i} d={`M${2 + i * 7}.5 0v3`} />
        ))}
      </svg>
    </Zoom>
    <DrawTools>
      {DRAW_TOOLS.map(([label, d, width]) => (
        <DrawButton key={label} aria-label={label} $on={label === '십자선'}>
          <Icon d={d} width={width} />
        </DrawButton>
      ))}
    </DrawTools>
  </Footer>
);

const App = () => (
  <Window>
    <GlobalStyle />
    <Header />
    <Body>
      <Toolbars>
        <Controls />
        <Quotes />
      </Toolbars>
      <ChartFrame>
        <Chart>
          <PricePanel />
          <PriceAxis />
          <VolumePanel />
          <VolumeAxis />
          <MonthRow>
            {MONTHS.map(([label], i) => (
              <Month key={label} $first={i === 0}>
                {label}
              </Month>
            ))}
          </MonthRow>
          <LastDay>12/16</LastDay>
        </Chart>
        <BottomBar />
      </ChartFrame>
    </Body>
  </Window>
);

export default App;
